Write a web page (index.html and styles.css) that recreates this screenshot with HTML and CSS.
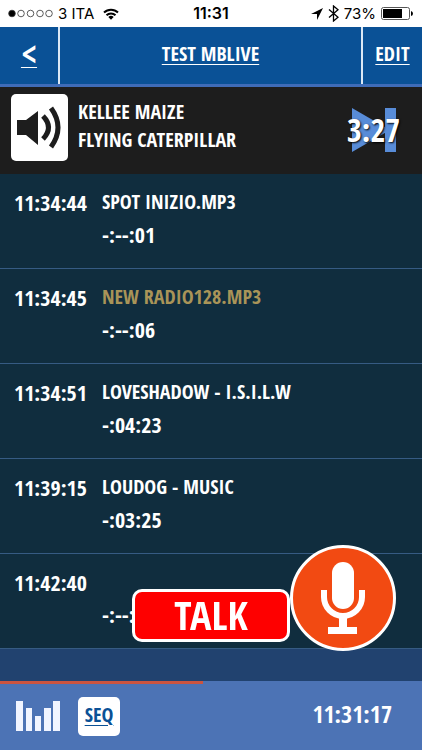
FILE: index.html
```html
<!doctype html>
<html lang="en">

<head>
    <meta charset="utf-8">
    <title>TEST MBLIVE</title>
    <meta name="viewport" content="width=device-width,initial-scale=1">
    <link rel="stylesheet" href="styles.css">
</head>

<body>
    <div class="status-bar">
        <div class="status-left">
            <svg width="45" height="9" viewBox="0 0 45 9" fill="none" stroke="#333" stroke-width="0.8">
                <circle cx="4" cy="4.5" r="3.3" fill="#000" />
                <circle cx="13" cy="4.5" r="3.3" />
                <circle cx="22.5" cy="4.5" r="3.3" />
                <circle cx="32" cy="4.5" r="3.3" />
                <circle cx="41" cy="4.5" r="3.3" />
            </svg>
            <span>3 ITA</span>
            <svg class="wifi" width="16" height="12" viewBox="0 0 16 12" fill="none" stroke="#000" stroke-width="2">
                <path d="M1 4.5a10 10 0 0 1 14 0M3.5 7.3a6.4 6.4 0 0 1 9 0" />
                <path d="M5.3 9a3.8 3.8 0 0 1 5.4 0L8 11.8z" fill="#000" stroke="none" />
            </svg>
        </div>
        <div class="status-time">11:31</div>
        <div class="status-right">
            <svg width="12" height="12" viewBox="0 0 12 12">
                <path d="M12 0L6 12L6 6L0 6z" />
            </svg>
            <svg width="11" height="17" viewBox="0 0 11 17" fill="none" stroke="#000" stroke-width="1.3">
                <path d="M1 4.5L10 12.2L5.5 16V1L10 4.8L1 12.5" />
            </svg>
            <span>73%</span>
            <svg width="33" height="13" viewBox="0 0 33 13">
                <rect x="0.5" y="0.5" width="28" height="12" rx="2" fill="none" stroke="#555" />
                <rect x="2" y="2" width="19" height="9" />
                <path d="M30 4q2 .5 2 2.5t-2 2.5z" />
            </svg>
        </div>
    </div>
    <header class="nav">
        <a class="nav-back" href="#">&lt;</a>
        <a class="nav-title" href="#">TEST MBLIVE</a>
        <a class="nav-edit" href="#">EDIT</a>
    </header>
    <section class="player">
        <button class="btn-volume" aria-label="Volume">
            <svg width="45" height="43" viewBox="0 0 45 43" fill="none" stroke="#1d1d1d" stroke-width="5">
                <path d="M0 14h9L21 5v34L9 29H0z" fill="#1d1d1d" stroke="none" />
                <path d="M26 10q11 11.5 0 23" />
                <path d="M34 2q14 19.5 0 39" />
            </svg>
        </button>
        <div class="player-song">
            KELLEE MAIZE<br>
            FLYING CATERPILLAR
        </div>
        <button class="btn-next" aria-label="Next">
            <svg width="44" height="44" viewBox="0 0 44 44" fill="#588cd8">
                <path d="M0 0L38 22L0 44zM33 0h11v44H33z" />
            </svg>
            <span class="btn-next-time">3:27</span>
        </button>
    </section>
    <ul class="playlist">
        <li>
            <span class="start">11:34:44</span>
            <div>
                <div class="song">SPOT INIZIO.MP3</div>
                <div class="duration">-:--:01</div>
            </div>
        </li>
        <li>
            <span class="start">11:34:45</span>
            <div>
                <div class="song gold">NEW RADIO128.MP3</div>
                <div class="duration">-:--:06</div>
            </div>
        </li>
        <li>
            <span class="start">11:34:51</span>
            <div>
                <div class="song">LOVESHADOW - I.S.I.L.W</div>
                <div class="duration">-:04:23</div>
            </div>
        </li>
        <li>
            <span class="start">11:39:15</span>
            <div>
                <div class="song">LOUDOG - MUSIC</div>
                <div class="duration">-:03:25</div>
            </div>
        </li>
        <li>
            <span class="start">11:42:40</span>
            <div>
                <div class="song"></div>
                <div class="duration">-:--:--</div>
            </div>
        </li>
    </ul>
    <footer class="footer">
        <div class="progress"></div>
        <div class="footer-bar">
            <svg width="44" height="30" viewBox="0 0 44 30" fill="#f0f4ff">
                <path d="M0 0h7v30H0zM10 7h6v23h-6zM19 15h6v15h-6zM28 7h7v23h-7zM37 0h7v30h-7z" />
            </svg>
            <a class="btn-seq" href="#">SEQ</a>
            <span class="clock">11:31:17</span>
        </div>
    </footer>
    <div class="talk">
        <button class="btn-talk">TALK</button>
        <button class="btn-mic" aria-label="Microphone">
            <svg width="44" height="72" viewBox="0 0 44 72" fill="#fff">
                <rect x="11" y="0" width="22" height="47" rx="11" />
                <path d="M3 28v7a19 19 0 0 0 38 0v-7" fill="none" stroke="#fff" stroke-width="6" />
                <path d="M18 54h8v11h10v7H7v-7h11z" />
            </svg>
        </button>
    </div>
</body>

</html>
```
FILE: styles.css
```css
* {
    box-sizing: border-box;
}

body {
    margin: 0;
    min-height: 100vh;
    display: flex;
    flex-direction: column;
    background-color: #21426f;
    color: #fff;
    font-family: "Avenir Next Condensed", "Open Sans Condensed", "Roboto Condensed", "Liberation Sans Narrow", sans-serif;
    font-size: 20px;
    font-weight: bold;
    line-height: 32px;
}

button {
    padding: 0;
    border: 0;
    color: inherit;
    font: inherit;
    display: flex;
    align-items: center;
    justify-content: center;
}

a {
    color: inherit;
    text-underline-offset: 3px;
    text-decoration-thickness: 1px;
}

/* status bar */
.status-bar {
    display: grid;
    grid-template-columns: 1fr auto 1fr;
    align-items: center;
    height: 27px;
    padding: 0 8px;
    background-color: #fff;
    color: #000;
    font-family: Inter, sans-serif;
    font-size: 15px;
    font-weight: normal;
    line-height: 27px;
}

.status-left,
.status-right {
    display: flex;
    align-items: center;
    gap: 5px;
}

.status-right {
    justify-content: flex-end;
}

.wifi {
    margin-left: 4px;
}

.status-time {
    font-size: 16px;
    font-weight: 600;
}

/* header */
.nav {
    display: flex;
    height: 60px;
    background-color: #0a5196;
    border-bottom: 3px solid #3f6cb8;
}

.nav a {
    display: flex;
    align-items: center;
    justify-content: center;
    padding-bottom: 4px;
    text-decoration-line: underline;
}

.nav-back {
    width: 58px;
    font-size: 36px;
    text-underline-offset: 0;
}

.nav .nav-title {
    flex: 1;
    border: solid #dce8f5;
    border-width: 0 2px;
}

.nav-edit {
    width: 59px;
}

/* now playing */
.player {
    display: flex;
    align-items: flex-start;
    height: 87px;
    padding: 7px 26px 0 11px;
    background-color: #1d1d1d;
}

.btn-volume {
    width: 57px;
    height: 67px;
    border-radius: 5px;
    background-color: #fff;
}

.player-song {
    flex: 1;
    margin-left: 10px;
    padding-top: 4px;
    line-height: 28px;
}

.btn-next {
    position: relative;
    margin-top: 14px;
    background: none;
}

.btn-next-time {
    position: absolute;
    right: -4px;
    font-size: 32px;
    text-shadow: 1px 1px 2px #000;
}

/* playlist */
.playlist {
    margin: 0;
    padding: 0;
    list-style: none;
    background-color: #102d3e;
}

.playlist li {
    display: flex;
    height: 95px;
    padding: 12px 14px 0;
    border-bottom: 1px solid #365b83;
}

.start,
.duration {
    font-size: 22px;
}

.start {
    width: 88px;
}

.song {
    min-height: 32px;
}

.gold {
    color: #a99458;
}

/* footer */
.footer {
    margin-top: auto;
    background-color: #4c73b5;
}

.progress {
    width: 48%;
    height: 3px;
    background-color: #cb5440;
}

.footer-bar {
    display: flex;
    align-items: center;
    height: 66px;
    padding: 0 30px 2px 16px;
}

.btn-seq {
    width: 42px;
    height: 39px;
    margin-left: 18px;
    border-radius: 5px;
    background-color: #fff;
    color: #0a5196;
    line-height: 36px;
    text-align: center;
}

.clock {
    margin-left: auto;
    padding-bottom: 4px;
    font-size: 24px;
}

/* talk buttons over the list */
.talk {
    position: fixed;
    right: 26px;
    bottom: 99px;
    display: flex;
    align-items: flex-end;
}

.btn-talk {
    width: 158px;
    height: 53px;
    margin-bottom: 9px;
    padding-bottom: 2px;
    border: 3px solid #fff;
    border-radius: 10px;
    background-color: #fe0000;
    font-size: 40px;
}

.btn-mic {
    width: 106px;
    height: 106px;
    border: 3px solid #fff;
    border-radius: 50%;
    background-color: #f24a12;
}
```
